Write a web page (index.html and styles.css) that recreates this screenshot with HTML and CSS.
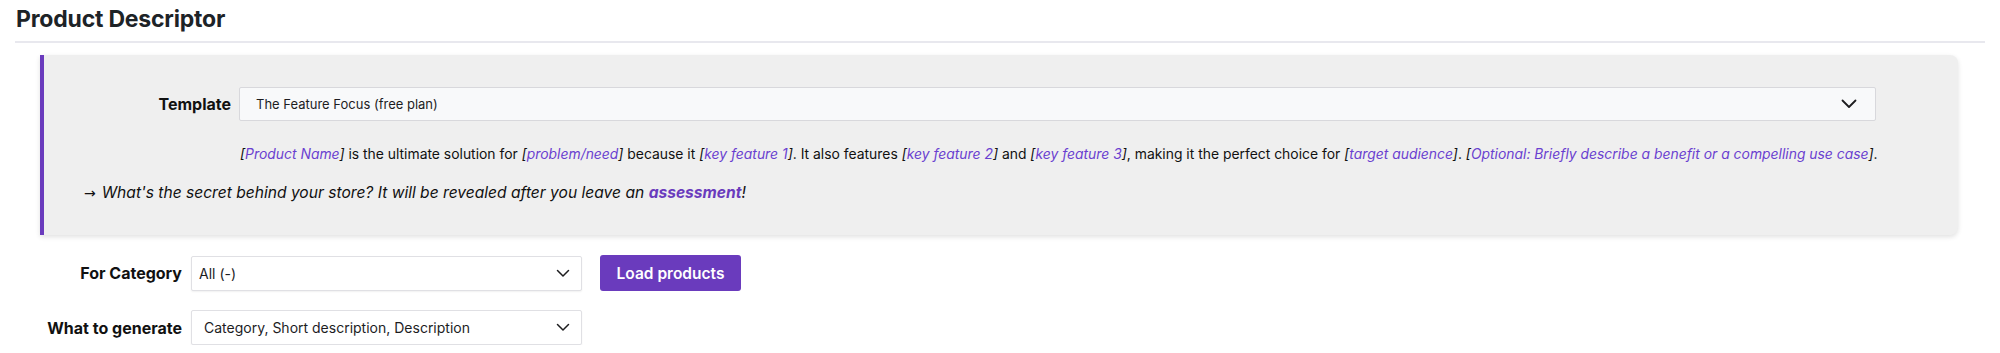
FILE: index.html
```html
<!DOCTYPE html>
<html>
<head>
<meta charset="utf-8">
<link rel="stylesheet" href="styles.css">
</head>
<body>
<div class="page">
  <h1 class="title">Product Descriptor</h1>
  <div class="panel">
    <div class="tpl-row">
      <div class="tpl-label">Template</div>
      <div class="select select-tpl">
        <span>The Feature Focus (free plan)</span>
        <svg class="chev-big" width="16" height="10" viewBox="0 0 16 10"><path d="M1.5 1.5 L8 8 L14.5 1.5" fill="none" stroke="#1d1d1f" stroke-width="1.8" stroke-linecap="round" stroke-linejoin="round"/></svg>
      </div>
    </div>
    <p class="tpl-desc"><i>[<span class="ph">Product Name</span>]</i> is the ultimate solution for <i>[<span class="ph">problem/need</span>]</i> because it <i>[<span class="ph">key feature 1</span>]</i>. It also features <i>[<span class="ph">key feature 2</span>]</i> and <i>[<span class="ph">key feature 3</span>]</i>, making it the perfect choice for <i>[<span class="ph">target audience</span>]</i>. <i>[<span class="ph">Optional: Briefly describe a benefit or a compelling use case</span>]</i>.</p>
    <p class="secret"><span class="arrow">→</span><i>What's the secret behind your store? It will be revealed after you leave an <b class="assess">assessment</b>!</i></p>
  </div>
  <div class="form">
    <div class="form-row">
      <div class="form-label">For Category</div>
      <div class="select select-sm pad-a">
        <span>All (-)</span>
        <svg class="chev" width="14" height="9" viewBox="0 0 14 9"><path d="M1.5 1.5 L7 7 L12.5 1.5" fill="none" stroke="#1d1d1f" stroke-width="1.5" stroke-linecap="round" stroke-linejoin="round"/></svg>
      </div>
      <button class="btn">Load products</button>
    </div>
    <div class="form-row">
      <div class="form-label">What to generate</div>
      <div class="select select-sm pad-b">
        <span>Category, Short description, Description</span>
        <svg class="chev" width="14" height="9" viewBox="0 0 14 9"><path d="M1.5 1.5 L7 7 L12.5 1.5" fill="none" stroke="#1d1d1f" stroke-width="1.5" stroke-linecap="round" stroke-linejoin="round"/></svg>
      </div>
    </div>
  </div>
</div>
</body>
</html>
```
FILE: styles.css
```css
* { box-sizing: border-box; }
html, body { margin: 0; padding: 0; background: #ffffff; }
body {
  font-family: Inter, "Noto Sans", "Liberation Sans", sans-serif;
  color: #111111;
}
.page {
  padding: 0 15px;
}
.title {
  margin: 0;
  padding: 5px 0 0 1px;
  height: 43px;
  font-size: 23px;
  line-height: 28px;
  font-weight: 700;
  color: #1d2327;
  border-bottom: 2px solid #e8e8ee;
  letter-spacing: -0.2px;
}
.panel {
  margin: 12px 27px 0 25px;
  background: #efefef;
  border-left: 4px solid #6a3bbd;
  border-radius: 0 8px 8px 0;
  box-shadow: 0 2px 5px rgba(0, 0, 0, 0.12);
  padding: 32px 82px 30px 40px;
  height: 180px;
}
.tpl-row {
  display: flex;
  align-items: center;
  gap: 8px;
}
.tpl-label {
  width: 147px;
  text-align: right;
  font-weight: 700;
  font-size: 16px;
}
.select {
  display: flex;
  align-items: center;
  justify-content: space-between;
  font-size: 13px;
  color: #1d1d1f;
}
.select-tpl {
  flex: 1;
  height: 34px;
  background: #f8f9fa;
  border: 1px solid #d8d8dc;
  border-radius: 2px;
  padding: 0 18px 0 16px;
}
.chev-big { flex: none; }
.tpl-desc {
  margin: 24px 0 0 156px;
  font-size: 13.9px;
  line-height: 18px;
  color: #111;
  white-space: nowrap;
}
.tpl-desc .ph { color: #6a3fd0; }
.secret {
  margin: 20px 0 0 0;
  font-size: 15.6px;
  line-height: 20px;
  white-space: nowrap;
}
.arrow {
  font-family: "DejaVu Sans", sans-serif;
  font-size: 14px;
  margin-right: 6px;
}
.assess { color: #6a3bbd; font-weight: 700; }
.form {
  padding-top: 20px;
  display: flex;
  flex-direction: column;
  gap: 19px;
}
.form-row {
  display: flex;
  align-items: center;
}
.form-label {
  width: 167px;
  text-align: right;
  font-weight: 700;
  font-size: 16px;
  margin-right: 9px;
}
.select-sm {
  width: 391px;
  height: 35px;
  background: #ffffff;
  border: 1px solid #e0e0e4;
  border-radius: 2px;
  box-shadow: 0 1px 2px rgba(0, 0, 0, 0.06);
  padding-right: 11px;
  font-size: 14px;
}
.pad-a { padding-left: 7px; }
.pad-b { padding-left: 12px; }
.chev { flex: none; }
.btn {
  margin-left: 18px;
  width: 141px;
  height: 36px;
  background: #6a3bbd;
  color: #ffffff;
  border: none;
  border-radius: 3px;
  font-family: inherit;
  font-size: 15.5px;
  font-weight: 600;
  padding: 0;
}
```
